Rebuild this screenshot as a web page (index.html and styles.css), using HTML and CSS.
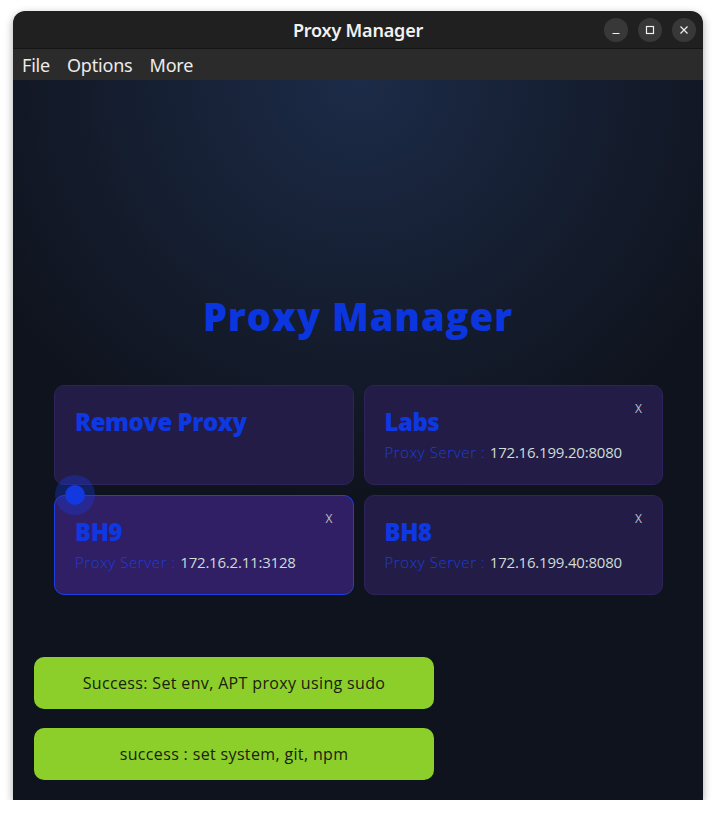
FILE: index.html
```html
<!DOCTYPE html>
<html>
<head>
<meta charset="utf-8">
<link rel="stylesheet" href="styles.css">
</head>
<body>
<div class="window">
  <div class="titlebar">
    <div class="title">Proxy Manager</div>
    <div class="controls">
      <span class="ctl"><svg width="10" height="10" viewBox="0 0 10 10"><path d="M1.5 8.5h7" stroke="#f0f0f0" stroke-width="1.2"/></svg></span>
      <span class="ctl"><svg width="10" height="10" viewBox="0 0 10 10"><rect x="1.5" y="1.5" width="7" height="7" fill="none" stroke="#f0f0f0" stroke-width="1.2"/></svg></span>
      <span class="ctl"><svg width="10" height="10" viewBox="0 0 10 10"><path d="M1.5 1.5l7 7M8.5 1.5l-7 7" stroke="#f0f0f0" stroke-width="1.2"/></svg></span>
    </div>
  </div>
  <div class="menubar">
    <span class="menu-item">File</span>
    <span class="menu-item">Options</span>
    <span class="menu-item">More</span>
  </div>
  <div class="content">
    <h1 class="heading">Proxy Manager</h1>
    <div class="grid">
      <div class="card">
        <div class="card-title">Remove Proxy</div>
      </div>
      <div class="card">
        <div class="card-title">Labs</div>
        <div class="card-info"><span class="label">Proxy Server : </span><span class="ip">172.16.199.20:8080</span></div>
        <span class="close">X</span>
      </div>
      <div class="card active">
        <div class="card-title">BH9</div>
        <div class="card-info"><span class="label">Proxy Server : </span><span class="ip">172.16.2.11:3128</span></div>
        <span class="close">X</span>
        <span class="ripple"><span class="ripple-dot"></span></span>
      </div>
      <div class="card">
        <div class="card-title">BH8</div>
        <div class="card-info"><span class="label">Proxy Server : </span><span class="ip">172.16.199.40:8080</span></div>
        <span class="close">X</span>
      </div>
    </div>
    <div class="toasts">
      <div class="toast">Success: Set env, APT proxy using sudo</div>
      <div class="toast">success : set system, git, npm</div>
    </div>
  </div>
</div>
</body>
</html>
```
FILE: styles.css
```css
html, body {
  margin: 0;
  padding: 0;
  background: #ffffff;
}
body {
  padding: 11px 0 0 13px;
  font-family: "Open Sans", "Noto Sans", sans-serif;
}
.window {
  width: 690px;
  height: 789px;
  border-radius: 12px 12px 0 0;
  overflow: hidden;
  display: flex;
  flex-direction: column;
  box-shadow: 0 3px 8px rgba(0,0,0,0.35);
}
.titlebar {
  height: 37px;
  background: #202020;
  border-bottom: 1px solid #151515;
  position: relative;
  display: flex;
  align-items: center;
  justify-content: center;
}
.title {
  color: #f2f2f2;
  font-family: "Noto Sans", sans-serif;
  font-weight: 600;
  font-size: 18px;
  letter-spacing: -0.2px;
}
.controls {
  position: absolute;
  right: 7px;
  top: 7px;
  display: flex;
  gap: 10px;
}
.ctl {
  width: 24px;
  height: 24px;
  border-radius: 50%;
  background: #383838;
  display: flex;
  align-items: center;
  justify-content: center;
}
.menubar {
  height: 31px;
  background: #2b2b2b;
  display: flex;
  align-items: center;
  gap: 17px;
  padding-left: 9px;
}
.menu-item {
  color: #ececec;
  font-family: "Noto Sans", sans-serif;
  font-size: 18px;
  letter-spacing: -0.2px;
}
.content {
  flex: 1;
  background: radial-gradient(ellipse 420px 420px at 50% 0%, #1c2b48 0%, #151e30 55%, #0f131d 100%);
  display: flex;
  flex-direction: column;
  padding-top: 211px;
}
.heading {
  margin: 0;
  text-align: center;
  color: #0b36df;
  font-family: "Open Sans", sans-serif;
  font-weight: 800;
  font-size: 38px;
  line-height: 50px;
  letter-spacing: 1px;
}
.grid {
  margin: 44px 40px 0 41px;
  display: grid;
  grid-template-columns: 1fr 1fr;
  gap: 10px 10px;
}
.card {
  position: relative;
  height: 100px;
  box-sizing: border-box;
  background: #231c47;
  border: 1px solid #2c245a;
  border-radius: 10px;
  padding: 18px 20px 0 20px;
}
.card.active {
  background: #301f65;
  border-color: #1d3fe6;
}
.card-title {
  color: #0d38e2;
  font-family: "Open Sans", sans-serif;
  font-weight: 800;
  font-size: 24px;
  line-height: 36px;
  letter-spacing: -0.5px;
}
.card-info {
  font-family: "Open Sans", sans-serif;
  font-size: 15px;
  line-height: 24px;
}
.label {
  color: #1d3dd2;
  font-weight: 300;
  letter-spacing: 0.6px;
}
.ip {
  color: #cddcd4;
  font-weight: 400;
  letter-spacing: -0.2px;
}
.close {
  position: absolute;
  top: 14px;
  right: 20px;
  color: #b8c0cc;
  font-family: "Open Sans", sans-serif;
  font-size: 12px;
}
.ripple {
  position: absolute;
  left: 0;
  top: -21px;
  width: 40px;
  height: 40px;
  border-radius: 50%;
  background: rgba(22, 58, 225, 0.35);
  display: flex;
  align-items: center;
  justify-content: center;
}
.ripple-dot {
  width: 20px;
  height: 20px;
  border-radius: 50%;
  background: #1238e0;
}
.toasts {
  margin: 62px 0 0 21px;
  display: flex;
  flex-direction: column;
  gap: 19px;
}
.toast {
  width: 400px;
  height: 52px;
  border-radius: 10px;
  background: #8ccf2a;
  color: #1b2010;
  font-family: "Open Sans", sans-serif;
  font-size: 16px;
  letter-spacing: 0.35px;
  display: flex;
  align-items: center;
  justify-content: center;
}
```
